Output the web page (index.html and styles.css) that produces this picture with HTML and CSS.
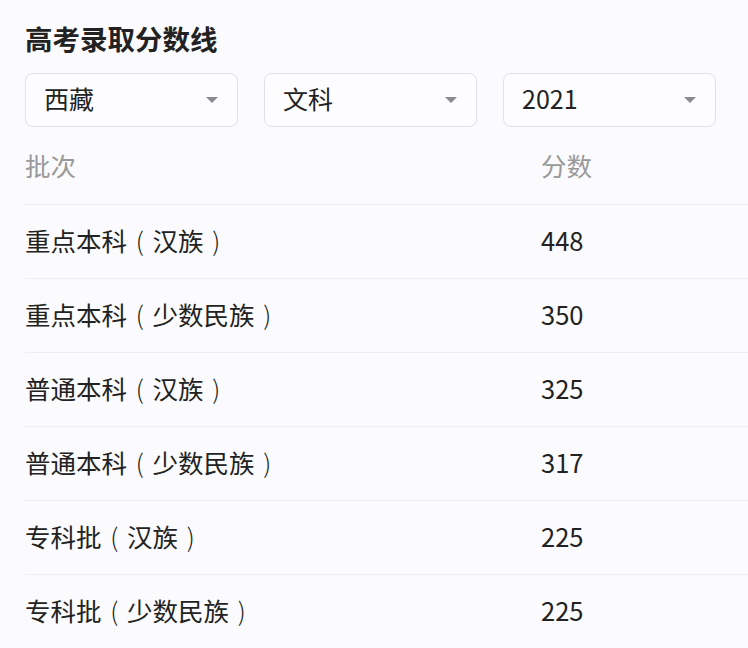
FILE: index.html
```html
<!DOCTYPE html>
<html lang="zh">
<head>
<meta charset="utf-8">
<link rel="stylesheet" href="styles.css">
</head>
<body>
<div class="page">
  <h1 class="title">高考录取分数线</h1>
  <div class="filters">
    <div class="select"><span class="val">西藏</span><i class="arrow"></i></div>
    <div class="select"><span class="val">文科</span><i class="arrow"></i></div>
    <div class="select"><span class="val">2021</span><i class="arrow"></i></div>
  </div>
  <div class="table">
    <div class="row head"><span class="c1">批次</span><span class="c2">分数</span></div>
    <div class="row"><span class="c1">重点本科<span class="p">(</span>汉族<span class="p">)</span></span><span class="c2">448</span></div>
    <div class="row"><span class="c1">重点本科<span class="p">(</span>少数民族<span class="p">)</span></span><span class="c2">350</span></div>
    <div class="row"><span class="c1">普通本科<span class="p">(</span>汉族<span class="p">)</span></span><span class="c2">325</span></div>
    <div class="row"><span class="c1">普通本科<span class="p">(</span>少数民族<span class="p">)</span></span><span class="c2">317</span></div>
    <div class="row"><span class="c1">专科批<span class="p">(</span>汉族<span class="p">)</span></span><span class="c2">225</span></div>
    <div class="row"><span class="c1">专科批<span class="p">(</span>少数民族<span class="p">)</span></span><span class="c2">225</span></div>
  </div>
</div>
</body>
</html>
```
FILE: styles.css
```css
html, body {
  margin: 0;
  padding: 0;
  background: #fbfbfd;
}
.page {
  padding: 20px 0 0 25px;
  font-family: "Noto Sans CJK SC", "Noto Sans", sans-serif;
  color: #222;
}
.title {
  margin: 0;
  font-size: 27.5px;
  line-height: 36px;
  font-weight: 700;
  color: #222;
}
.filters {
  display: flex;
  gap: 26px;
  margin-top: 17px;
}
.select {
  box-sizing: border-box;
  width: 213px;
  height: 54px;
  border: 1px solid #e2e2e6;
  border-radius: 8px;
  background: #fdfdff;
  display: flex;
  align-items: center;
  justify-content: space-between;
  padding: 0 19px 0 18px;
  font-size: 25px;
  color: #222;
}
.val {
  padding-bottom: 4px;
}
.arrow {
  width: 0;
  height: 0;
  border-left: 6px solid transparent;
  border-right: 6px solid transparent;
  border-top: 6px solid #8a8a92;
}
.row {
  display: flex;
  align-items: center;
  box-sizing: border-box;
  height: 74px;
  padding-bottom: 5px;
  border-top: 1px solid #eeeef1;
  font-size: 25.5px;
  color: #222;
}
.row.head {
  height: 77px;
  border-top: none;
  padding-bottom: 2px;
  color: #999;
}
.p {
  display: inline-block;
  width: 1em;
  text-align: center;
  font-weight: 300;
}
.c1 {
  width: 516px;
}
.c2 {
  flex: 1;
}
```
